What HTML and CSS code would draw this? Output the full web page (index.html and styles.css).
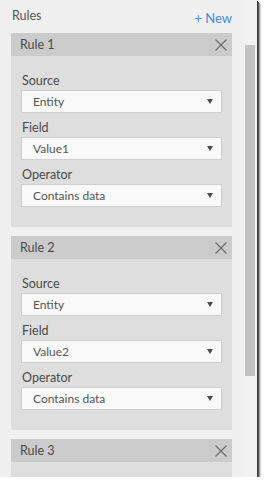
FILE: index.html
```html
<!DOCTYPE html>
<html>
<head>
<meta charset="utf-8">
<link rel="stylesheet" href="styles.css">
</head>
<body>
<div class="frame">
  <div class="main">
    <div class="title-row">
      <span class="title">Rules</span>
      <span class="new">+ New</span>
    </div>

    <div class="card">
      <div class="card-head">
        <span>Rule 1</span>
        <svg class="close" width="12" height="12" viewBox="0 0 12 12"><path d="M0.5 0.5 L11.5 11.5 M11.5 0.5 L0.5 11.5" stroke="#6a6a6a" stroke-width="1.1" fill="none"/></svg>
      </div>
      <div class="card-body">
        <div class="label">Source</div>
        <div class="select"><span>Entity</span><span class="arrow"></span></div>
        <div class="label">Field</div>
        <div class="select"><span>Value1</span><span class="arrow"></span></div>
        <div class="label">Operator</div>
        <div class="select"><span>Contains data</span><span class="arrow"></span></div>
      </div>
    </div>

    <div class="card">
      <div class="card-head">
        <span>Rule 2</span>
        <svg class="close" width="12" height="12" viewBox="0 0 12 12"><path d="M0.5 0.5 L11.5 11.5 M11.5 0.5 L0.5 11.5" stroke="#6a6a6a" stroke-width="1.1" fill="none"/></svg>
      </div>
      <div class="card-body">
        <div class="label">Source</div>
        <div class="select"><span>Entity</span><span class="arrow"></span></div>
        <div class="label">Field</div>
        <div class="select"><span>Value2</span><span class="arrow"></span></div>
        <div class="label">Operator</div>
        <div class="select"><span>Contains data</span><span class="arrow"></span></div>
      </div>
    </div>

    <div class="card">
      <div class="card-head">
        <span>Rule 3</span>
        <svg class="close" width="12" height="12" viewBox="0 0 12 12"><path d="M0.5 0.5 L11.5 11.5 M11.5 0.5 L0.5 11.5" stroke="#6a6a6a" stroke-width="1.1" fill="none"/></svg>
      </div>
      <div class="card-body short"></div>
    </div>
  </div>
  <div class="scroll">
    <div class="thumb"></div>
  </div>
</div>
</body>
</html>
```
FILE: styles.css
```css
html, body {
  margin: 0;
  padding: 0;
  background: #ffffff;
}
body {
  font-family: Lato, "Noto Sans", sans-serif;
  font-size: 12.5px;
  color: #4a4a4a;
}
.frame {
  width: 257px;
  height: 477px;
  background: #f0f0f0;
  display: flex;
  overflow: hidden;
  box-shadow: 1px 1px 0 #3a3a3a, 2px 2px 0 #5a5a5a, 3px 3px 0 #9a9a9a, 4px 4px 1px #d8d8d8;
}
.main {
  width: 244px;
  padding: 0 12px 0 11px;
  box-sizing: border-box;
}
.title-row {
  display: flex;
  justify-content: space-between;
  align-items: center;
  height: 33px;
  padding: 0 0 0 1px;
  box-sizing: border-box;
}
.title {
  color: #555;
  font-size: 12.5px;
  margin-top: -2px;
}
.new {
  color: #3f8ee0;
  font-size: 13px;
  margin-top: 2px;
}
.card {
  margin-bottom: 9px;
}
.card-head {
  height: 23px;
  background: #cbcbcb;
  display: flex;
  align-items: center;
  justify-content: space-between;
  padding: 0 5px 0 9px;
}
.card-head span {
  color: #4a4a4a;
}
.close {
  display: block;
}
.card-body {
  background: #dedede;
  padding: 10px 10px 20px 10px;
}
.card-body.short {
  height: 40px;
  padding: 0;
}
.label {
  height: 24px;
  box-sizing: border-box;
  padding: 6px 0 0 1px;
  line-height: 18px;
  color: #4a4a4a;
}
.select {
  height: 23px;
  box-sizing: border-box;
  background: #f9f9f9;
  border: 1px solid #cfcfcf;
  display: flex;
  align-items: center;
  justify-content: space-between;
  padding: 0 8px 0 11px;
  font-size: 12px;
  color: #555;
}
.arrow {
  width: 0;
  height: 0;
  border-left: 3px solid transparent;
  border-right: 3px solid transparent;
  border-top: 5px solid #4a4a4a;
}
.scroll {
  width: 13px;
  background: #f2f2f2;
}
.thumb {
  margin-top: 45px;
  margin-left: 1px;
  width: 10px;
  height: 331px;
  background: #c2c2c2;
}
```
